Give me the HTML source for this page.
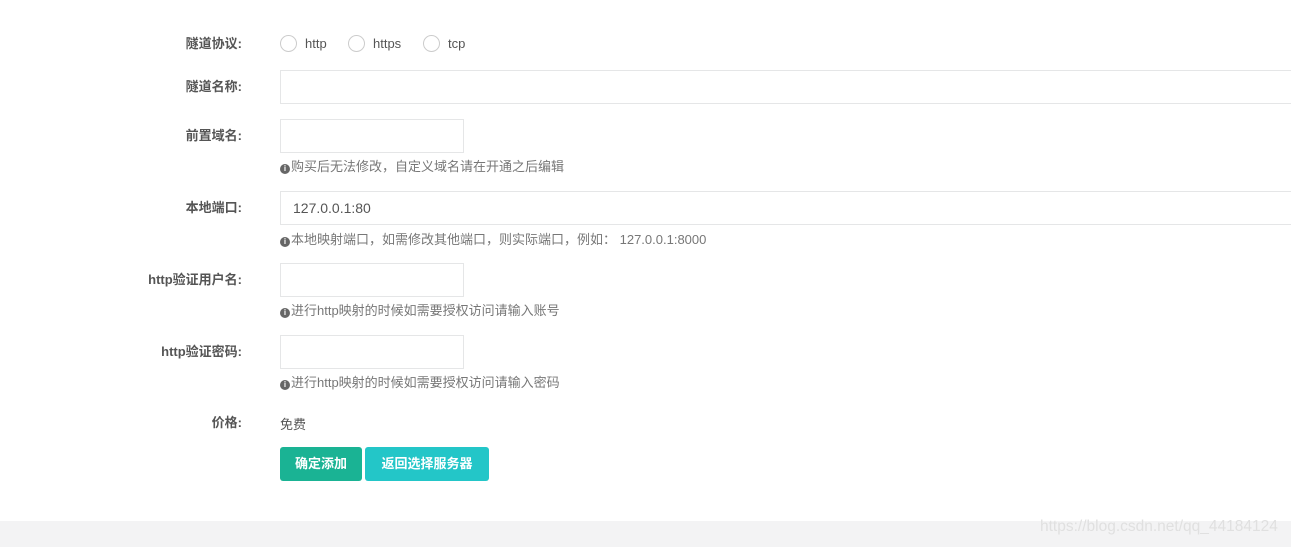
<!DOCTYPE html><html><head><meta charset="utf-8"><style>
body{margin:0;width:1291px;height:547px;background:#fff;position:relative;overflow:hidden;font-family:"Liberation Sans","Noto Sans CJK SC",sans-serif;color:#676a6c}
.l{position:absolute;right:1049px;font-size:13px;font-weight:bold;color:#555;white-space:nowrap;line-height:16px}
.i{position:absolute;left:280px;border:1px solid #e5e6e7;box-sizing:border-box;height:34px;font-size:14px;color:#555;padding:0 12px;line-height:32px}
.w{width:1020px}.s{width:184px}
.h{position:absolute;left:280px;font-size:13px;color:#777;line-height:14px;white-space:nowrap}
.h b{display:inline-block;width:10px;height:10px;border-radius:50%;background:#666;color:#fff;font-size:8px;line-height:10px;text-align:center;vertical-align:0px;margin-right:1px}
.r{position:absolute;top:35px;width:17px;height:17px;border:1px solid #ccc;border-radius:50%;box-sizing:border-box}
.t{position:absolute;top:36px;font-size:13px;color:#555}
.btn{position:absolute;top:447px;height:34px;color:#fff;font-size:13px;font-weight:bold;line-height:34px;text-align:center;border-radius:3px}
</style></head><body>
<div class="l" style="top:36px">隧道协议:</div>
<div class="r" style="left:280px"></div><div class="t" style="left:305px">http</div>
<div class="r" style="left:348px"></div><div class="t" style="left:373px">https</div>
<div class="r" style="left:423px"></div><div class="t" style="left:448px">tcp</div>
<div class="l" style="top:79px">隧道名称:</div><div class="i w" style="top:70px"></div>
<div class="l" style="top:128px">前置域名:</div><div class="i s" style="top:119px"></div>
<div class="h" style="top:160px"><b>i</b>购买后无法修改，自定义域名请在开通之后编辑</div>
<div class="l" style="top:200px">本地端口:</div><div class="i w" style="top:191px">127.0.0.1:80</div>
<div class="h" style="top:233px"><b>i</b>本地映射端口，如需修改其他端口，则实际端口，例如： 127.0.0.1:8000</div>
<div class="l" style="top:272px">http验证用户名:</div><div class="i s" style="top:263px"></div>
<div class="h" style="top:304px"><b>i</b>进行http映射的时候如需要授权访问请输入账号</div>
<div class="l" style="top:344px">http验证密码:</div><div class="i s" style="top:335px"></div>
<div class="h" style="top:376px"><b>i</b>进行http映射的时候如需要授权访问请输入密码</div>
<div class="l" style="top:415px">价格:</div><div class="t" style="left:280px;top:414px">免费</div>
<div class="btn" style="left:280px;width:82px;background:#1ab394">确定添加</div>
<div class="btn" style="left:365px;width:124px;background:#23c6c8">返回选择服务器</div>
<div style="position:absolute;left:0;top:521px;width:1291px;height:26px;background:#f3f3f4"></div>
<div style="position:absolute;left:1040px;top:518px;font-size:15.5px;color:#e0e0e0">https://blog.csdn.net/qq_44184124</div>
</body></html>
